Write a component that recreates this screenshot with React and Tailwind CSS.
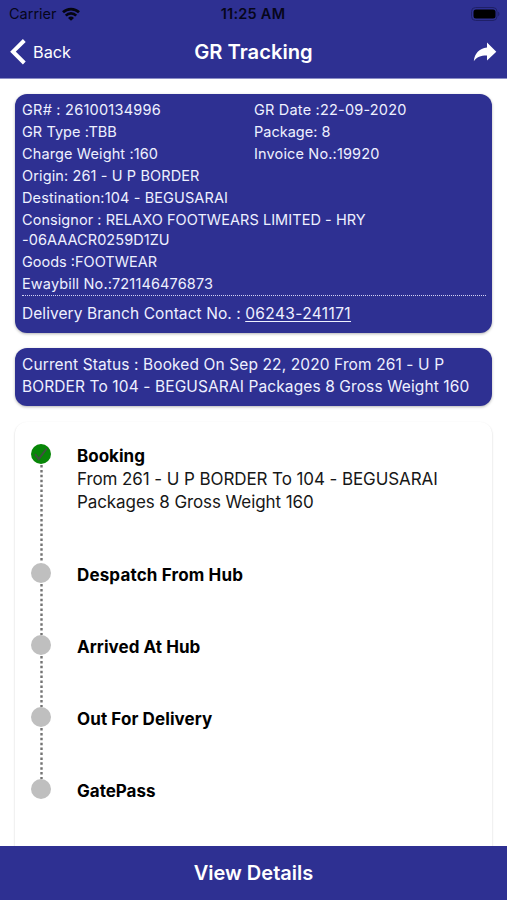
const details = [
  [{ label: 'GR# : 26100134996', space: 'tracking-[0.24px]' }, { label: 'GR Date :22-09-2020', space: 'tracking-[0.2px]' }],
  [{ label: 'GR Type :TBB', space: 'tracking-[0.05px]' }, { label: 'Package: 8', space: 'tracking-normal' }],
  [{ label: 'Charge Weight :160', space: 'tracking-[0.12px]' }, { label: 'Invoice No.:19920', space: 'tracking-[0.15px]' }],
  [{ label: 'Origin: 261 - U P BORDER', space: 'tracking-[0.12px]' }],
  [{ label: 'Destination:104 - BEGUSARAI', space: 'tracking-[0.12px]' }],
  [{ label: 'Consignor : RELAXO FOOTWEARS LIMITED - HRY\n-06AAACR0259D1ZU', space: 'tracking-[0.06px]' }],
  [{ label: 'Goods :FOOTWEAR', space: 'tracking-normal' }],
  [{ label: 'Ewaybill No.:721146476873', space: 'tracking-[0.14px]' }],
];

const steps = [
  {
    title: 'Booking',
    text: 'From 261 - U P BORDER To 104 - BEGUSARAI\nPackages 8 Gross Weight 160',
    done: true,
    height: 'h-[119px]',
  },
  { title: 'Despatch From Hub', height: 'h-[72px]', space: 'tracking-[0.15px]' },
  { title: 'Arrived At Hub', height: 'h-[72px]', space: 'tracking-[0.05px]' },
  { title: 'Out For Delivery', height: 'h-[72px]', space: 'tracking-[0.1px]' },
  { title: 'GatePass', height: 'h-[57px]' },
];

const WifiIcon = () => (
  <svg width="18" height="14" viewBox="0 0 18 14" fill="none" stroke="#050510" strokeWidth="2.7">
    <path d="M1 5.3a11.5 11.5 0 0 1 16 0" />
    <path d="M3.8 8.6a7.4 7.4 0 0 1 10.4 0" />
    <path d="M9 13.8 6 10.9a4.3 4.3 0 0 1 6 0z" fill="#050510" stroke="none" />
  </svg>
);

const BatteryIcon = () => (
  <svg width="29" height="14" viewBox="0 0 29 14">
    <rect x="0.5" y="0.5" width="25.5" height="13" rx="4" fill="none" stroke="#1f2068" />
    <rect x="2.5" y="2.5" width="22" height="9" rx="2.5" fill="#000" />
    <path d="M27.2 4.8c1.6.6 1.6 3.8 0 4.4z" fill="#1f2068" />
  </svg>
);

const ShareIcon = () => (
  <svg width="24" height="20" viewBox="0 0 24 20" fill="#fff">
    <path d="M14 0.6 23.3 9.7 14 18.6v-5.1C8 13.4 4 14.8 0.8 19.2 1.8 11.5 6 6.4 14 5.6z" />
  </svg>
);

const Header = () => (
  <header className="h-[79px] shrink-0 bg-[#2e3092] border-b border-[#8b8dc6]">
    <div className="grid grid-cols-3 h-[27px] items-center pl-[9px] pr-[7px] text-[#06061a]">
      <div className="flex items-center gap-[5px] text-[14.5px]">
        <span>Carrier</span>
        <WifiIcon />
      </div>
      <span className="pr-[3px] text-center text-[14.5px] font-semibold tracking-[0.25px]">11:25 AM</span>
      <div className="flex justify-end">
        <BatteryIcon />
      </div>
    </div>
    <div className="grid grid-cols-3 h-[50px] items-center px-[10px] text-white">
      <button className="flex items-center gap-[7px] text-[16.3px]">
        <svg width="16" height="26" viewBox="0 0 16 26" fill="none" stroke="#fff" strokeWidth="4">
          <path d="M14.3 1.5 3 12.7l11.3 11.3" />
        </svg>
        <span className="pt-px">Back</span>
      </button>
      <h1 className="text-center text-[20.2px] font-semibold whitespace-nowrap">GR Tracking</h1>
      <button className="flex justify-end">
        <ShareIcon />
      </button>
    </div>
  </header>
);

const Step = ({ step, last }) => (
  <li className={`flex gap-[26px] ${step.height}`}>
    <div className="flex flex-col items-center w-5">
      <span
        className={`flex shrink-0 items-center justify-center size-5 rounded-full ${
          step.done ? 'bg-[#078607]' : 'bg-[#bfbfbf]'
        }`}
      >
        {step.done && (
          <svg width="14" height="14" viewBox="0 0 14 14" fill="none" stroke="#3f503f" strokeWidth="2">
            <path d="M1 7.2 4.8 12 12.7 1.5" />
          </svg>
        )}
      </span>
      {!last && (
        <svg className="w-[3px] flex-1">
          <line x1="1.5" y1="1" x2="1.5" y2="100%" stroke="#737373" strokeWidth="2.4" strokeDasharray="2.5 2.4" />
        </svg>
      )}
    </div>
    <div className="pt-px text-[17px] leading-[23px] whitespace-pre text-[#171717]">
      <h2 className={`font-bold text-black ${step.space || ''}`}>{step.title}</h2>
      <p className="tracking-[-0.09px]">{step.text}</p>
    </div>
  </li>
);

const App = () => {
  return (
    <div className="flex flex-col h-[900px] w-[507px] overflow-hidden bg-white font-['Inter',sans-serif]">
      <Header />

      <main className="flex flex-col flex-1 min-h-0 overflow-hidden px-[15px] pt-[15px]">
        <section className="h-[239px] shrink-0 rounded-[12px] bg-[#2e3092] pl-[7px] pr-[6px] pt-[6px] text-[#eef0ff] shadow-[0_1px_3px_rgba(0,0,0,0.3)]">
          <div className="h-[195px] text-[14.5px] leading-[20px]">
            {details.map((row) => (
              <div key={row[0].label} className={row.length > 1 ? 'grid grid-cols-2 pb-[2px]' : 'pb-[2px]'}>
                {row.map((cell) => (
                  <p key={cell.label} className={`whitespace-pre ${cell.space}`}>{cell.label}</p>
                ))}
              </div>
            ))}
          </div>
          <div className="border-t border-dotted border-[#d4d5f2] pt-[7px] text-[15.5px] leading-[22px] tracking-[0.07px]">
            Delivery Branch Contact No. :{' '}
            <span className="underline underline-offset-2 tracking-[0.37px]">06243-241171</span>
          </div>
        </section>

        <section className="mt-[15px] h-[58px] shrink-0 rounded-[12px] bg-[#2e3092] px-[7px] pt-[6px] text-[15.5px] leading-[22px] tracking-[0.11px] whitespace-pre text-[#eef0ff] shadow-[0_1px_3px_rgba(0,0,0,0.3)]">
          {'Current Status : Booked On Sep 22, 2020 From 261 - U P\nBORDER To 104 - BEGUSARAI Packages 8 Gross Weight 160'}
        </section>

        <section className="mt-4 h-[450px] shrink-0 rounded-[12px] px-4 pt-[22px] shadow-[0_1px_2px_rgba(0,0,0,0.22)]">
          <ul>
            {steps.map((step, i) => (
              <Step key={step.title} step={step} last={i === steps.length - 1} />
            ))}
          </ul>
        </section>
      </main>

      <button className="h-[54px] shrink-0 bg-[#2e3092] text-[20px] font-semibold text-white">
        View Details
      </button>
    </div>
  );
};

export default App;
